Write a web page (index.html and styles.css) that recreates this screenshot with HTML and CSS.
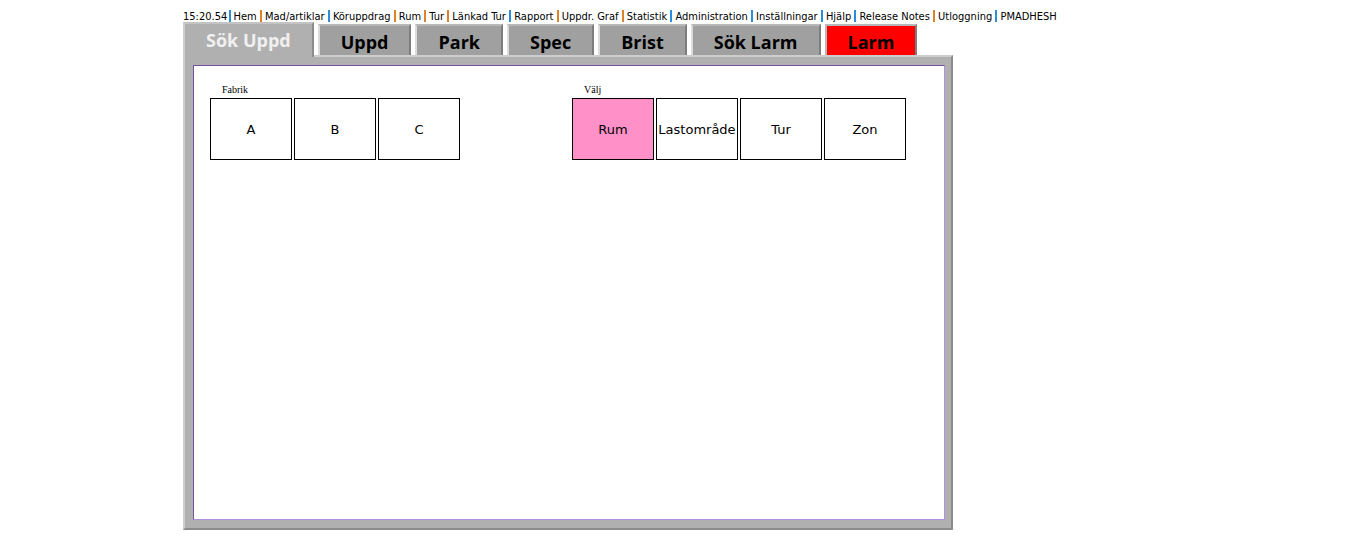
FILE: index.html
```html
<!DOCTYPE html>
<html lang="sv">
<head>
<meta charset="utf-8">
<title>Sök Uppd</title>
<link rel="stylesheet" href="styles.css">
</head>
<body>
<div class="page">
  <nav class="menu" aria-label="Huvudmeny">
    <span>15:20.54</span><i class="bar blue first"></i>
    <a href="#">Hem</a><i class="bar"></i>
    <a href="#">Mad/artiklar</a><i class="bar blue"></i>
    <a href="#">Köruppdrag</a><i class="bar"></i>
    <a href="#">Rum</a><i class="bar"></i>
    <a href="#">Tur</a><i class="bar"></i>
    <a href="#">Länkad Tur</a><i class="bar blue"></i>
    <a href="#">Rapport</a><i class="bar"></i>
    <a href="#">Uppdr. Graf</a><i class="bar"></i>
    <a href="#">Statistik</a><i class="bar blue"></i>
    <a href="#">Administration</a><i class="bar blue"></i>
    <a href="#">Inställningar</a><i class="bar blue"></i>
    <a href="#">Hjälp</a><i class="bar blue"></i>
    <a href="#">Release Notes</a><i class="bar"></i>
    <a href="#">Utloggning</a><i class="bar blue"></i>
    <span>PMADHESH</span>
  </nav>
  <div class="tabs">
    <button class="tab active">Sök Uppd</button>
    <button class="tab">Uppd</button>
    <button class="tab">Park</button>
    <button class="tab">Spec</button>
    <button class="tab">Brist</button>
    <button class="tab">Sök Larm</button>
    <button class="tab alarm">Larm</button>
  </div>
  <main class="panel">
    <div class="content">
      <section class="group" aria-labelledby="fabrik">
        <h2 class="label" id="fabrik">Fabrik</h2>
        <div class="choices">
          <button class="choice">A</button>
          <button class="choice">B</button>
          <button class="choice">C</button>
        </div>
      </section>
      <section class="group" aria-labelledby="valj">
        <h2 class="label" id="valj">Välj</h2>
        <div class="choices">
          <button class="choice selected">Rum</button>
          <button class="choice">Lastområde</button>
          <button class="choice">Tur</button>
          <button class="choice">Zon</button>
        </div>
      </section>
    </div>
  </main>
</div>
</body>
</html>
```

FILE: styles.css
```css
* {
  box-sizing: border-box;
}

body {
  margin: 0;
  background: #fff;
  color: #000;
}

.page {
  display: flex;
  flex-direction: column;
  max-width: 1000px;
  min-height: 100vh;
  margin: 0 auto;
  padding: 8px 0;
}

.menu {
  display: flex;
  align-items: center;
  justify-content: space-between;
  width: 874px;
  max-width: 100%;
  height: 16px;
  font: 11px/16px "DejaVu Sans Condensed", "DejaVu Sans", sans-serif;
  font-stretch: condensed;
  white-space: nowrap;
}

.menu a,
.menu span {
  padding-top: 1px;
  color: inherit;
  text-decoration: none;
}

.bar {
  flex: none;
  width: 2px;
  height: 12px;
  background: #dc8228;
}

.bar.blue {
  background: #2c8cdc;
}

.bar.first {
  margin: 0 -1px;
}

.tabs {
  display: flex;
  align-items: flex-end;
  gap: 4px;
  margin-top: -2px;
}

.tab {
  height: 31px;
  padding: 2px 21px 0;
  border: 2px solid;
  border-color: #b8b8b8 #7d7d7d #b8b8b8 #dcdcdc;
  border-bottom: 0;
  background: #a0a0a0;
  color: #000;
  font: bold 18px/24px "Open Sans", sans-serif;
}

.tab.active {
  position: relative;
  height: 35px;
  margin-bottom: -2px;
  padding-bottom: 4px;
  border-color: #c4c4c4 #8c8c8c #b0b0b0 #cdcdcd;
  background: #b0b0b0;
  color: #f0f0f0;
}

.tab.alarm {
  border-color: #b8b8b8 #7d7d7d #b8b8b8 #b8b8b8;
  background: #f00;
}

.panel {
  display: flex;
  flex: 1;
  width: 77%;
  padding: 8px 6px 8px 8px;
  border: 2px solid;
  border-color: #cdcdcd #8c8c8c #8c8c8c #cdcdcd;
  background: #b0b0b0;
}

.content {
  display: flex;
  flex: 1;
  align-items: flex-start;
  gap: 112px;
  padding: 16px;
  border: 1px solid;
  border-color: #7850a0 #b090e0 #b090e0 #7850a0;
  background: #fff;
}

.label {
  margin: 0 12px;
  font: 10px/16px "Liberation Serif", serif;
}

.choices {
  display: flex;
  gap: 2px;
}

.choice {
  width: 82px;
  height: 62px;
  padding: 2px 0 0;
  border: 1px solid #000;
  background: #fff;
  color: #000;
  font: 13px/16px "DejaVu Sans", sans-serif;
}

.choice.selected {
  background: #ff90c8;
}
```
